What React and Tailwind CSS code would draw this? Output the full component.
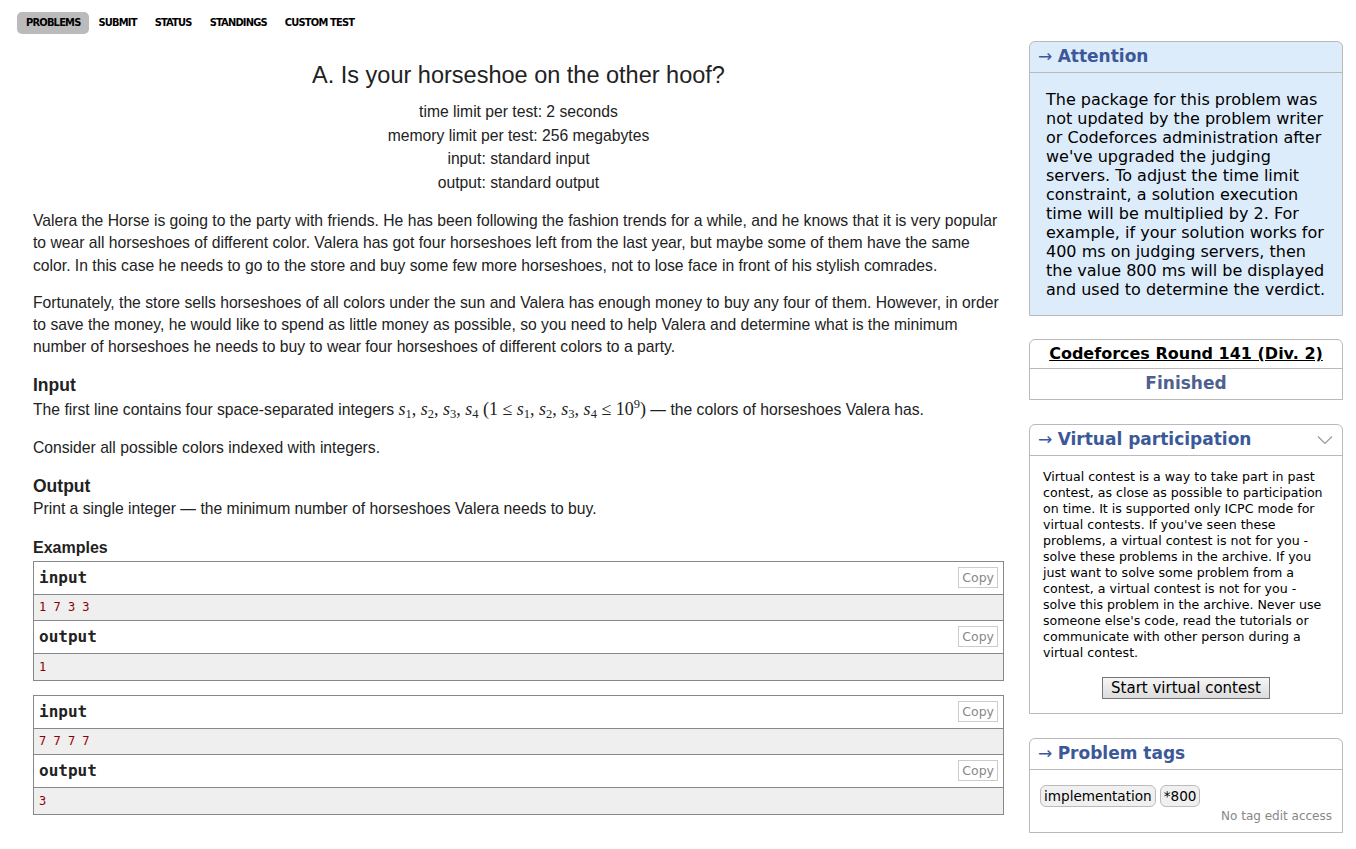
import React from 'react'

const MENU = ['PROBLEMS', 'SUBMIT', 'STATUS', 'STANDINGS', 'CUSTOM TEST']

const SAMPLES = [
  { input: '1 7 3 3', output: '1' },
  { input: '7 7 7 7', output: '3' },
]

const arial = { fontFamily: '"Liberation Sans", Arial, sans-serif' }

function S({ i }) {
  return (
    <span>
      <i>s</i>
      <sub className="text-[12.5px] leading-none">{i}</sub>
    </span>
  )
}

function Formula() {
  return (
    <span className="font-['Liberation_Serif',serif] text-[18px]">
      <S i={1} />, <S i={2} />, <S i={3} />, <S i={4} /> (1 ≤ <S i={1} />, <S i={2} />, <S i={3} />, <S i={4} /> ≤ 10
      <sup className="relative top-[-7px] align-baseline text-[12.5px] leading-none">9</sup>)
    </span>
  )
}

function CopyBtn() {
  return (
    <span className="border border-[#ccc] px-[3px] text-[12.5px] leading-[19px] text-[#888] font-['DejaVu_Sans',sans-serif]">
      Copy
    </span>
  )
}

function SampleBox({ input, output }) {
  return (
    <div className="border border-[#888] font-['DejaVu_Sans_Mono',monospace]">
      <div className="flex h-[33px] items-center justify-between border-b border-[#888] bg-white pl-[5px] pr-[5px]">
        <span className="text-[16px] font-bold text-[#222]">input</span>
        <CopyBtn />
      </div>
      <div className="flex h-[26px] items-center border-b border-[#888] bg-[#efefef] px-[5px] text-[12px] text-[#8b0000]">
        {input}
      </div>
      <div className="flex h-[33px] items-center justify-between border-b border-[#888] bg-white pl-[5px] pr-[5px]">
        <span className="text-[16px] font-bold text-[#222]">output</span>
        <CopyBtn />
      </div>
      <div className="flex h-[26px] items-center bg-[#efefef] px-[5px] text-[12px] text-[#8b0000]">
        {output}
      </div>
    </div>
  )
}

function Arrow() {
  return <span className="font-normal">→ </span>
}

function SideBox({ title, chevron, children, className = '' }) {
  return (
    <div className={`rounded-t-[6px] border border-[#b9b9b9] ${className}`}>
      <div className="flex h-[31px] items-center justify-between border-b border-[#b9b9b9] px-[8px] text-[17px] font-bold text-[#3b5998]">
        <span>
          <Arrow />
          {title}
        </span>
        {chevron && (
          <svg width="16" height="10" viewBox="0 0 16 10" className="mr-[1px]">
            <path d="M1 1.5 L8 8.5 L15 1.5" fill="none" stroke="#999" strokeWidth="1.2" />
          </svg>
        )}
      </div>
      {children}
    </div>
  )
}

export default function App() {
  return (
    <div className="min-h-[849px] w-[1356px] bg-white text-[#222]">
      <div className="flex pl-[17px] pt-[12px] font-['DejaVu_Sans',sans-serif] font-stretch-condensed">
        {MENU.map((m, i) => (
          <span
            key={m}
            className={`flex h-[22px] items-center px-[9px] text-[11px] font-bold tracking-[-0.8px] text-black ${i === 0 ? 'rounded-[5px] bg-[#bbb]' : ''}`}
          >
            {m}
          </span>
        ))}
      </div>

      <div className="flex pr-[13px]">
        <div className="w-[971px] ml-[33px] text-[15.7px]" style={arial}>
          <div className="pt-[26px] text-center">
            <div className="text-[23.5px] leading-[30px] text-[#222]">A. Is your horseshoe on the other hoof?</div>
            <div className="mt-[10px] leading-[23.5px]">
              <div>time limit per test: 2 seconds</div>
              <div>memory limit per test: 256 megabytes</div>
              <div>input: standard input</div>
              <div>output: standard output</div>
            </div>
          </div>

          <div className="mt-[16px] leading-[22.3px]">
            <p>
              Valera the Horse is going to the party with friends. He has been following the fashion trends for a while, and he knows that it is very popular to wear all horseshoes of different color. Valera has got four horseshoes left from the last year, but maybe some of them have the same color. In this case he needs to go to the store and buy some few more horseshoes, not to lose face in front of his stylish comrades.
            </p>
            <p className="mt-[15px]">
              Fortunately, the store sells horseshoes of all colors under the sun and Valera has enough money to buy any four of them. However, in order to save the money, he would like to spend as little money as possible, so you need to help Valera and determine what is the minimum number of horseshoes he needs to buy to wear four horseshoes of different colors to a party.
            </p>
          </div>

          <div className="mt-[15px]">
            <div className="text-[17.5px] font-bold leading-[22px]">Input</div>
            <p className="leading-[26px]">
              The first line contains four space-separated integers <Formula /> — the colors of horseshoes Valera has.
            </p>
            <p className="mt-[14px] leading-[22px]">Consider all possible colors indexed with integers.</p>
          </div>

          <div className="mt-[16px]">
            <div className="text-[17.5px] font-bold leading-[22px]">Output</div>
            <p className="leading-[24px]">Print a single integer — the minimum number of horseshoes Valera needs to buy.</p>
          </div>

          <div className="mt-[16px]">
            <div className="text-[16px] font-bold leading-[22px]">Examples</div>
            <div className="mt-[2px] flex flex-col gap-[14px]">
              {SAMPLES.map((s, i) => (
                <SampleBox key={i} {...s} />
              ))}
            </div>
          </div>
        </div>

        <div className="ml-[25px] w-[314px] pt-[7px] font-['DejaVu_Sans',Verdana,sans-serif]">
          <SideBox title="Attention" className="bg-[#ddecfb]">
            <div className="px-[16px] pb-[16px] pt-[17px] text-[16px] leading-[19px] text-black">
              The package for this problem was not updated by the problem writer or Codeforces administration after we've upgraded the judging servers. To adjust the time limit constraint, a solution execution time will be multiplied by 2. For example, if your solution works for 400 ms on judging servers, then the value 800 ms will be displayed and used to determine the verdict.
            </div>
          </SideBox>

          <div className="mt-[23px] rounded-t-[6px] border border-[#b9b9b9] text-center text-[16px] font-bold">
            <div className="flex h-[29px] items-center justify-center border-b border-[#b9b9b9]">
              <span className="text-black underline">Codeforces Round 141 (Div. 2)</span>
            </div>
            <div className="flex h-[30px] items-center justify-center text-[17px] text-[#4f5f8f]">Finished</div>
          </div>

          <SideBox title="Virtual participation" chevron className="mt-[24px]">
            <div className="pb-[14px] pl-[13px] pr-[15px] pt-[13px] text-[12.6px] leading-[16px] text-black">
              <p>
                Virtual contest is a way to take part in past contest, as close as possible to participation on time. It is supported only ICPC mode for virtual contests. If you've seen these problems, a virtual contest is not for you - solve these problems in the archive. If you just want to solve some problem from a contest, a virtual contest is not for you - solve this problem in the archive. Never use someone else's code, read the tutorials or communicate with other person during a virtual contest.
              </p>
              <div className="mt-[16px] flex justify-center pl-[2px]">
                <span className="border border-[#767676] bg-gradient-to-b from-[#f6f6f6] to-[#dcdcdc] px-[8px] text-[15px] leading-[20px]">
                  Start virtual contest
                </span>
              </div>
            </div>
          </SideBox>

          <SideBox title="Problem tags" className="mt-[24px]">
            <div className="px-[10px] pb-[8px] pt-[15px]">
              <div className="flex gap-[4px]">
                {['implementation', '*800'].map((t) => (
                  <span key={t} className="rounded-[6px] border border-[#bbb] bg-[#f0f0f0] px-[3px] text-[13.6px] leading-[20px] text-black">
                    {t}
                  </span>
                ))}
              </div>
              <div className="mt-[1px] text-right text-[12px] leading-[16px] text-[#888]">No tag edit access</div>
            </div>
          </SideBox>
        </div>
      </div>
    </div>
  )
}
